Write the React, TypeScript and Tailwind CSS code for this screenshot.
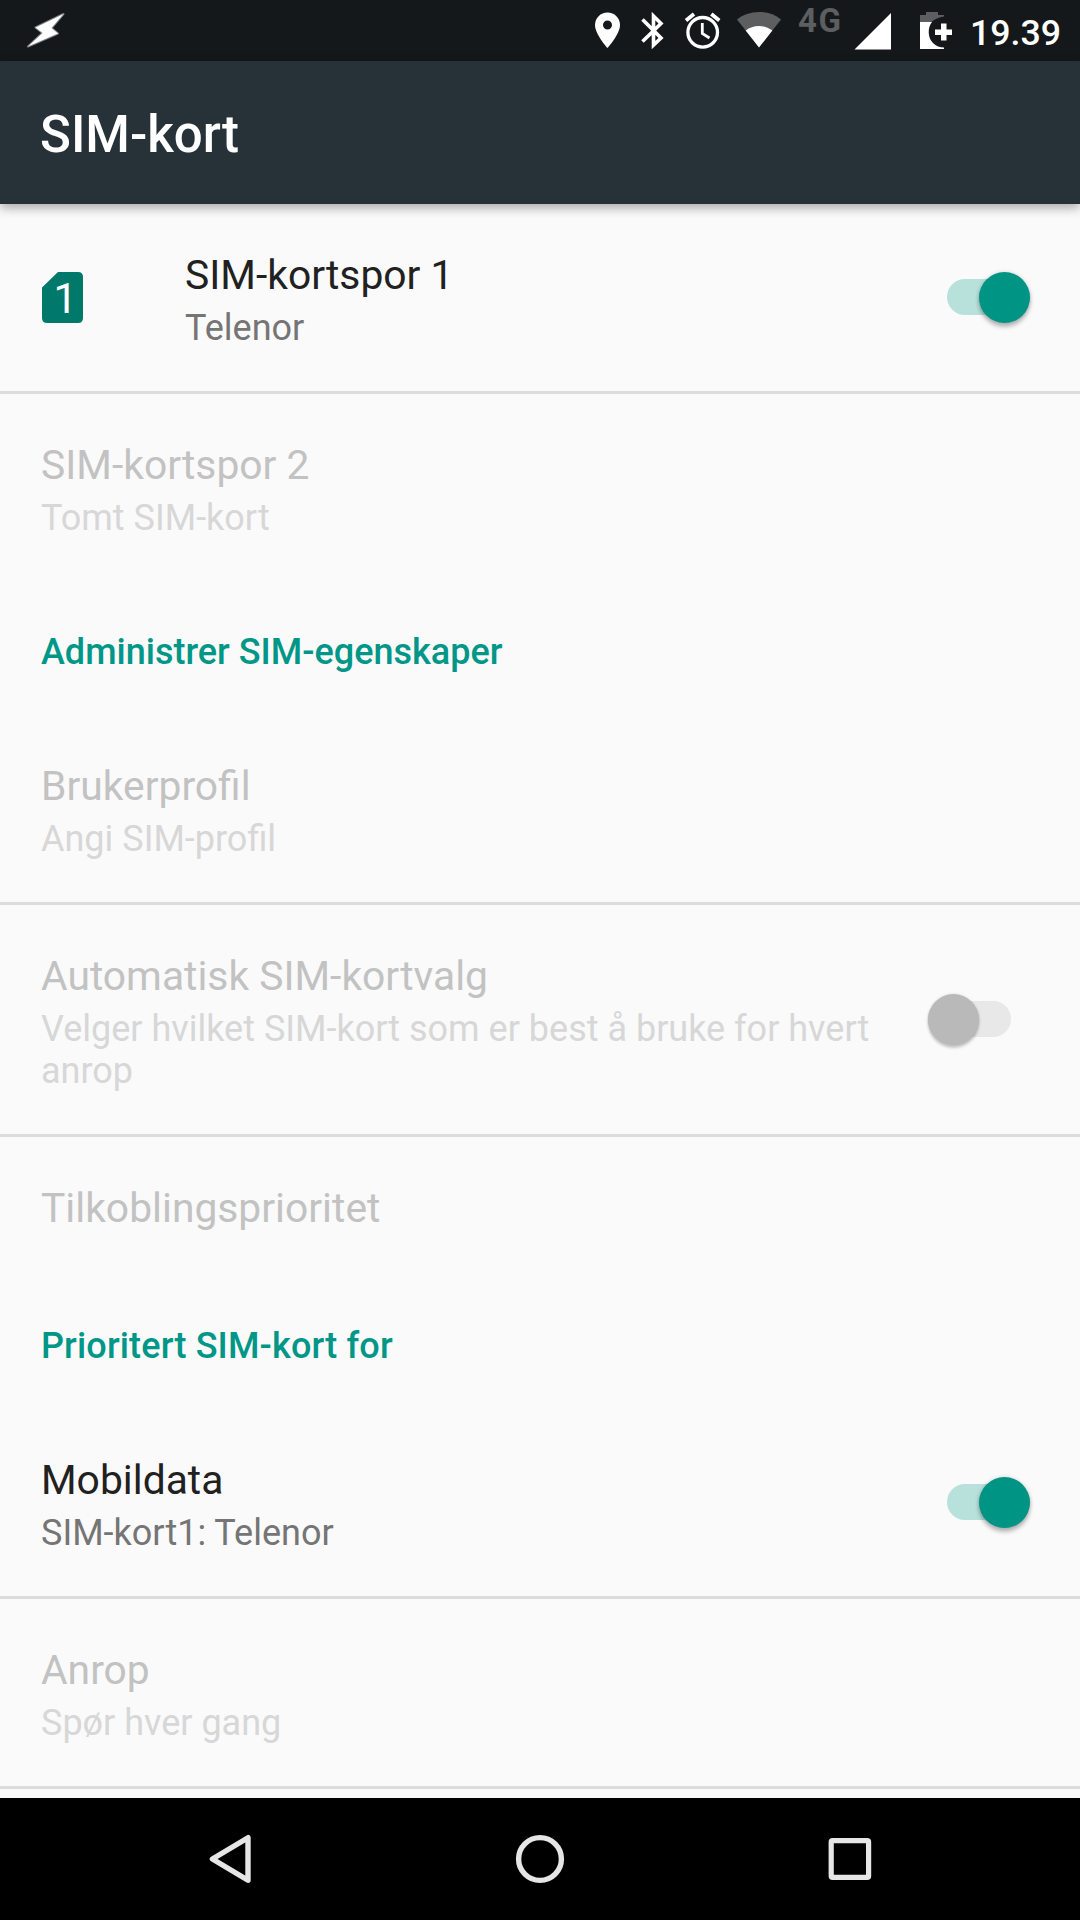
import { ReactNode } from "react";

function StatusBar() {
  return (
    <div className="flex h-[61px] shrink-0 items-start bg-[#14181b] text-white">
      <svg className="ml-[24px] mt-[10px] h-[42px] w-[44px]" viewBox="24 10 44 42" fill="none">
        <path
          d="M63.500 14 L35.500 27.500 L42.500 33 L28 46.500 L58 33.500 L51.500 28 Z"
          fill="#fff"
          stroke="#fff"
          strokeOpacity="0.45"
          strokeWidth="2"
          strokeLinejoin="round"
        />
      </svg>

      <svg className="ml-[507px] h-[61px] w-[65px]" viewBox="575 0 65 61">
        {/* location */}
        <path
          fillRule="evenodd"
          d="M607.500 12.500C600.500 12.500 595 18 595 25C595 34.300 607.500 48 607.500 48S620 34.300 620 25C620 18 614.500 12.500 607.500 12.500ZM607.500 29.500A4.500 4.500 0 1 1 607.500 20.500A4.500 4.500 0 0 1 607.500 29.500Z"
          fill="#fff"
        />
      </svg>
      <svg className="h-[61px] w-[40px]" viewBox="640 0 40 61" fill="none" stroke="#fff" strokeWidth="3.600">
        {/* bluetooth */}
        <path d="M642.500 19.500 L661 38 L653.500 45 V16 L661 23.500 L642.500 41.500" />
      </svg>
      <svg className="h-[61px] w-[50px]" viewBox="680 0 50 61" fill="none" stroke="#fff">
        {/* alarm */}
        <circle cx="702.700" cy="32.300" r="14.800" strokeWidth="3.300" />
        <path d="M702.300 23 V33.500 L709.500 38" strokeWidth="2.800" />
        <path d="M686 20.500 L694 14 M711.300 14 L719.300 20.500" strokeWidth="3.800" />
      </svg>
      <svg className="h-[61px] w-[60px]" viewBox="730 0 60 61">
        {/* wifi */}
        <path d="M759 47.500 L737 19.500 C743 14.800 750.500 12 759 12 S775 14.800 781 19.500 Z" fill="#5c5e60" />
        <path d="M759 47.500 L745.700 30.500 C749.500 27.500 754 26 759 26 S768.500 27.500 772.300 30.500 Z" fill="#fff" />
      </svg>
      <span className="ml-[8px] mt-[3px] w-[47px] text-[33px] leading-[36px] font-bold tracking-[1.500px] text-[#5c5e60]">4G</span>
      <svg className="h-[61px] w-[55px]" viewBox="845 0 55 61">
        {/* cell signal */}
        <path d="M854.500 49.500 H891 V13 Z" fill="#fff" />
      </svg>
      <svg className="h-[61px] w-[64px]" viewBox="900 0 64 61">
        {/* battery saver */}
        <path d="M920 22 V15 H926 V12 H938 V15 H944 V16.500 C939 17.500 934.500 19 931.500 22 Z" fill="#5c5e60" />
        <path d="M920 22 H932 C927.500 27 927.500 38 933 43 C936 46 940 47.500 944 47.500 V49 H920 Z" fill="#fff" />
        <path d="M941 23.500 H946.500 V29.500 H952 V35 H946.500 V40.500 H941 V35 H935 V29.500 H941 Z" fill="#fff" />
      </svg>
      <span className="ml-[6px] mt-[12px] text-[35.700px] leading-[42px] font-medium">19.39</span>
    </div>
  );
}

function SimIcon() {
  return (
    <svg className="ml-px h-[51px] w-[41px]" viewBox="0 0 41 51">
      <path d="M16 0 H36 Q41 0 41 5 V46 Q41 51 36 51 H5 Q0 51 0 46 V15.500 Z" fill="#00796b" />
      <text x="23.200" y="41" textAnchor="middle" fontFamily="Roboto, sans-serif" fontSize="42" fill="#fff">
        1
      </text>
    </svg>
  );
}

function Switch({ checked }: { checked: boolean }) {
  if (checked) {
    return (
      <div className="mr-[50px] mb-px flex h-[36px] w-[83px] items-center rounded-full bg-[#b8e1dc]">
        <div className="ml-[32px] h-[51px] w-[51px] shrink-0 rounded-full bg-[#009485] shadow-[0_4px_4px_rgba(0,0,0,0.25),0_0_4px_rgba(0,0,0,0.15)]" />
      </div>
    );
  }
  return (
    <div className="mr-[69px] mb-px flex h-[36px] w-[83px] items-center rounded-full bg-[#e8e8e8]">
      <div className="h-[51px] w-[51px] shrink-0 rounded-full bg-[#b9b9b9] shadow-[0_3px_3px_rgba(0,0,0,0.2),0_0_3px_rgba(0,0,0,0.12)]" />
    </div>
  );
}

interface RowProps {
  title: string;
  summary?: string;
  icon?: ReactNode;
  disabled?: boolean;
  divider?: boolean;
  control?: ReactNode;
}

function Row({ title, summary, icon, disabled, divider, control }: RowProps) {
  return (
    <div className={divider ? "border-b-[3px] border-[#dcdcdc]" : ""}>
      <div className="flex items-center pl-[41px]">
        {icon && <div className="w-[144px] shrink-0">{icon}</div>}
        <div className="max-w-[850px] pt-[47px] pb-[43px]">
          <div className={`text-[40.800px] leading-[48px] ${disabled ? "text-[#c2c2c2]" : "text-[#212121]"}`}>{title}</div>
          {summary && (
            <div className={`mt-[8px] -mb-px text-[36px] leading-[42px] ${disabled ? "text-[#d7d7d7]" : "text-[#757575]"}`}>
              {summary}
            </div>
          )}
        </div>
        {control && <div className="ml-auto">{control}</div>}
      </div>
    </div>
  );
}

function Category({ label, className = "" }: { label: string; className?: string }) {
  return (
    <div className={`h-[134px] pl-[41px] pt-[50px] text-[36px] leading-[42px] font-medium text-[#009688] ${className}`}>
      {label}
    </div>
  );
}

function NavBar() {
  return (
    <div className="flex h-[122px] shrink-0 items-center bg-black pl-[205px]">
      <svg className="h-[60px] w-[50px]" viewBox="0 0 50 60" fill="none" stroke="#e6e6e6" strokeWidth="5.400" strokeLinejoin="round">
        <path d="M43 8.700 V51.300 L7.400 30 Z" />
      </svg>
      <svg className="ml-[255px] h-[60px] w-[60px]" viewBox="0 0 60 60" fill="none" stroke="#e6e6e6" strokeWidth="5.400">
        <circle cx="30" cy="30" r="21.400" />
      </svg>
      <svg className="ml-[250px] h-[60px] w-[60px]" viewBox="0 0 60 60" fill="none" stroke="#e6e6e6" strokeWidth="5.200">
        <rect x="11.200" y="11.600" width="37.400" height="36.800" rx="1.500" />
      </svg>
    </div>
  );
}

export default function App() {
  return (
    <div className="flex h-[1920px] w-[1080px] flex-col overflow-hidden bg-[#fafafa] font-['Roboto',sans-serif]">
      <StatusBar />
      <header className="z-10 flex h-[143px] shrink-0 items-center bg-[#263238] pl-[40px] pt-[5px] text-[51px] font-medium text-white shadow-[0_4px_10px_rgba(0,0,0,0.32)]">
        SIM-kort
      </header>
      <main className="min-h-0 flex-1 overflow-hidden">
        <Row title="SIM-kortspor 1" summary="Telenor" icon={<SimIcon />} divider control={<Switch checked />} />
        <Row title="SIM-kortspor 2" summary="Tomt SIM-kort" disabled />
        <Category label="Administrer SIM-egenskaper" />
        <Row title="Brukerprofil" summary="Angi SIM-profil" disabled divider />
        <Row
          title="Automatisk SIM-kortvalg"
          summary="Velger hvilket SIM-kort som er best å bruke for hvert anrop"
          disabled
          divider
          control={<Switch checked={false} />}
        />
        <Row title="Tilkoblingsprioritet" disabled />
        <Category label="Prioritert SIM-kort for" className="tracking-[0.150px]" />
        <Row title="Mobildata" summary="SIM-kort1: Telenor" divider control={<Switch checked />} />
        <Row title="Anrop" summary="Spør hver gang" disabled divider />
      </main>
      <NavBar />
    </div>
  );
}
